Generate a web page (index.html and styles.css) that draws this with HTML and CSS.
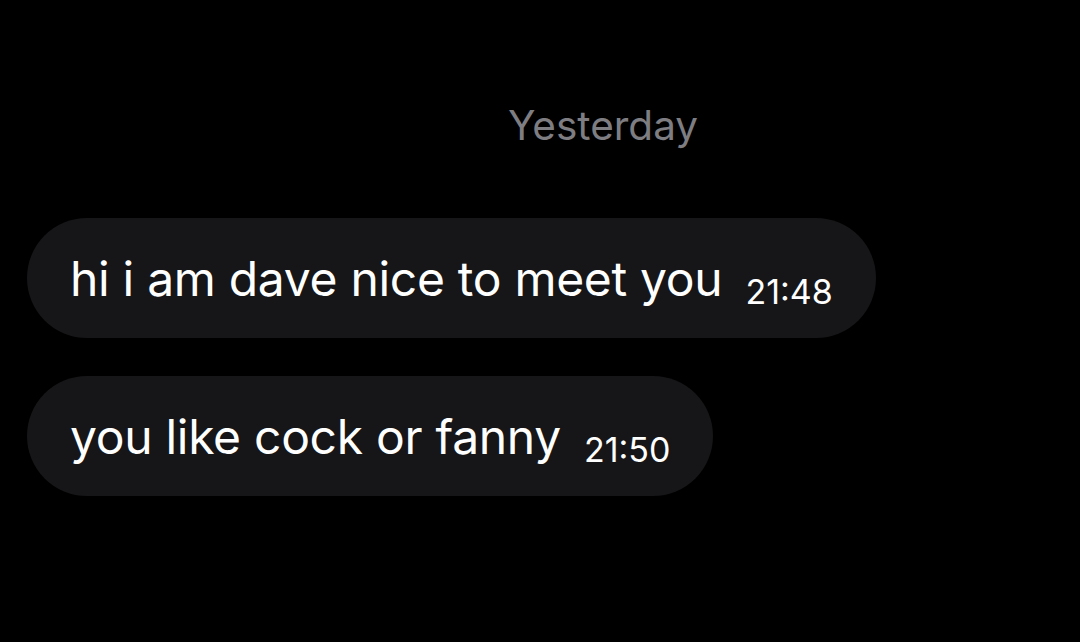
FILE: index.html
```html
<html>
<head>
	<title>Messages</title>
	<meta http-equiv="Content-Type" content="text/html; charset=utf-8" />
	<link rel="stylesheet" href="styles.css">
</head>
<body>
	<div class="chat">
		<div class="day">
			<label>Yesterday</label>
		</div>
		<div class="msg">
			<span class="text">hi i am dave nice to meet you</span><span class="time">21:48</span>
		</div>
		<div class="msg">
			<span class="text">you like cock or fanny</span><span class="time">21:50</span>
		</div>
	</div>
</body>
</html>
```

FILE: styles.css
```css
*{
	margin: 0;
	padding: 0;
}
body{
	background: #000;
	width: 1080px;
	height: 642px;
	overflow: hidden;
	font-family: Inter, "Liberation Sans", sans-serif;
}
.chat{
	display: flex;
	flex-direction: column;
	align-items: flex-start;
	padding: 101px 0 0 27px;
	gap: 38px;
}
.day{
	align-self: stretch;
	display: flex;
	justify-content: center;
	padding-left: 99px;
	margin-bottom: 29px;
}
.day > label{
	font-size: 40.5px;
	line-height: 50px;
	color: #7d7d82;
}
.msg{
	white-space: nowrap;
	height: 120px;
	box-sizing: border-box;
	padding: 33px 43px 0 43px;
	background: #161618;
	border-radius: 60px;
	font-size: 48px;
	line-height: 56px;
	color: #fff;
}
.msg > .text{
	letter-spacing: -0.3px;
}
.msg > .time{
	margin-left: 23px;
	font-size: 34px;
	vertical-align: -8px;
}
```
